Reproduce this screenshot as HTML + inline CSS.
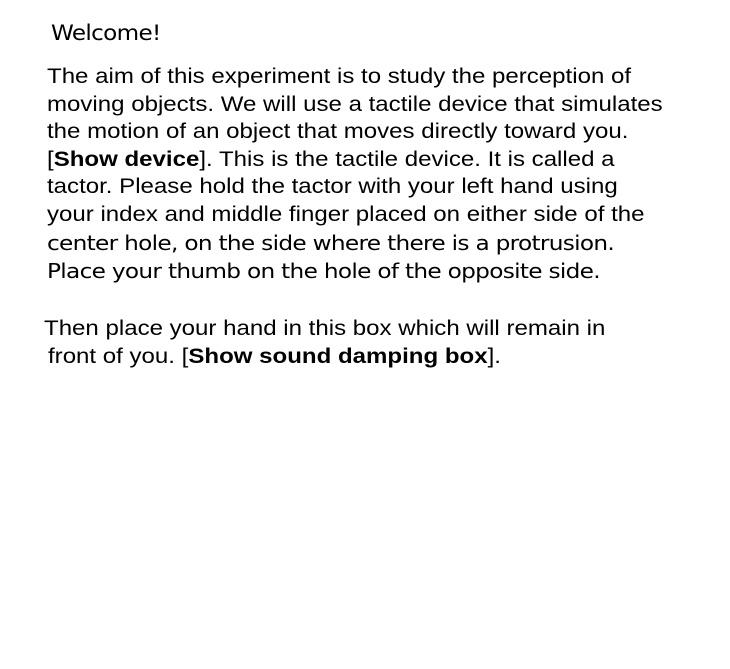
<!DOCTYPE html>
<html><head><meta charset="utf-8"><style>
body{margin:0;width:730px;height:669px;background:#fff;position:relative;overflow:hidden;color:#000}
.l{position:absolute;left:47px;font-family:"Liberation Sans",Arial,sans-serif;font-size:21px;line-height:28px;white-space:nowrap;transform-origin:0 50%;transform:scaleX(1.145)}
.d{font-family:"DejaVu Sans",sans-serif;font-size:20px;letter-spacing:-0.6px;transform:scaleX(1.16)}
</style></head><body>
<div class="l d" style="left:51px;top:19px;font-size:21px;transform:scaleX(1.1)">Welcome!</div>
<div class="l" style="top:63px">The aim of this experiment is to study the perception of</div>
<div class="l" style="top:91px">moving objects. We will use a tactile device that simulates</div>
<div class="l" style="top:118px">the motion of an object that moves directly toward you.</div>
<div class="l" style="top:146px">[<b>Show device</b>]. This is the tactile device. It is called a</div>
<div class="l" style="top:173px">tactor. Please hold the tactor with your left hand using</div>
<div class="l" style="top:201px">your index and middle finger placed on either side of the</div>
<div class="l d" style="top:229px">center hole, on the side where there is a protrusion.</div>
<div class="l d" style="top:257px">Place your thumb on the hole of the opposite side.</div>
<div class="l" style="left:44px;top:315px">Then place your hand in this box which will remain in</div>
<div class="l" style="left:48px;top:343px">front of you. [<b>Show sound damping box</b>].</div>
</body></html>
